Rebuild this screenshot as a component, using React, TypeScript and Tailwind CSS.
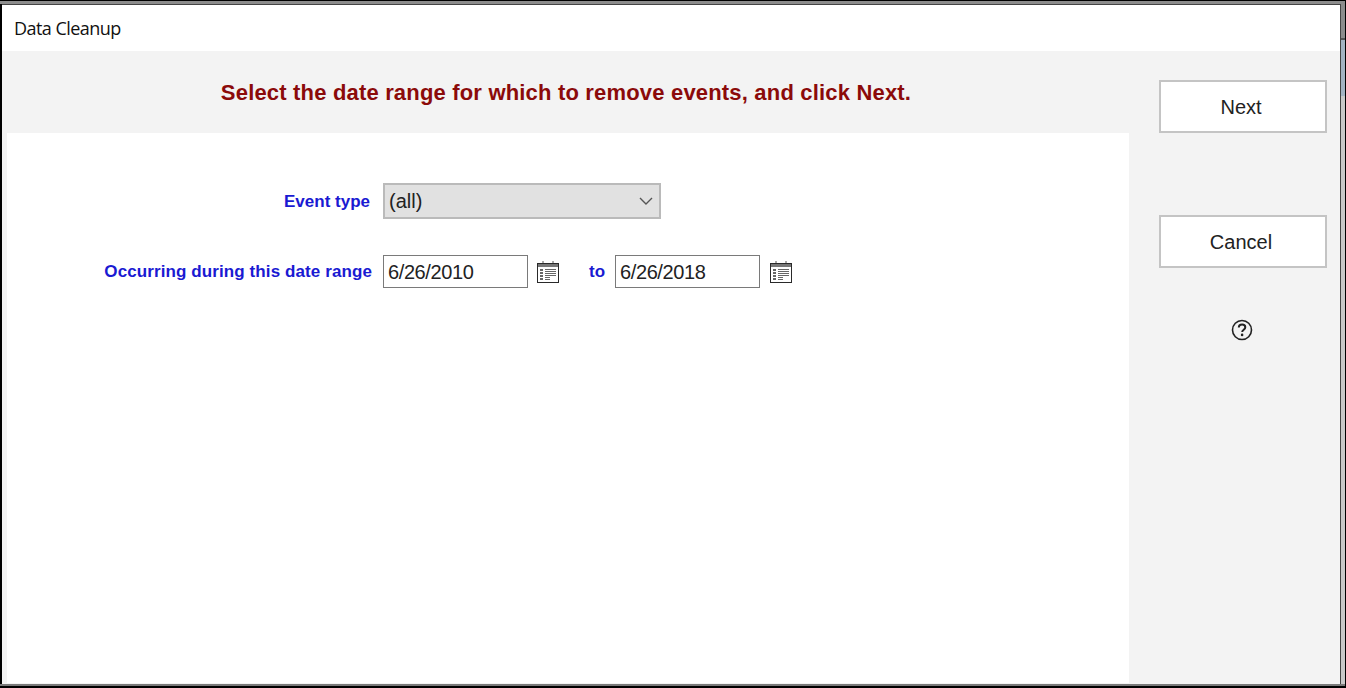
const sans = "font-['Liberation_Sans',Arial,sans-serif]";

function CalendarIcon() {
  return (
    <svg width="22" height="22" viewBox="0 0 22 22" className="shrink-0 mt-[1px]" fill="none">
      <path d="M6 0v3M16 0v3" stroke="#555" strokeWidth="1" />
      <rect x="0.5" y="2.5" width="21" height="19" stroke="#2a2a2a" strokeWidth="1" fill="#fff" />
      <rect x="1" y="3" width="20" height="3" fill="#777" />
      <path d="M3 9h3M3 12h3M3 15h3M3 18h3" stroke="#333" strokeWidth="1.5" />
      <path d="M8 8.5h11M8 10.5h11M8 12.5h11M8 14.5h11M8 16.5h5M8 18.5h5" stroke="#666" strokeWidth="1" />
    </svg>
  );
}

function DateField({ value }: { value: string }) {
  return (
    <div className="w-[145px] h-[33px] border border-[#7a7a7a] bg-white flex items-center pl-[4px] text-[20px] text-[#222] tracking-[-0.4px]">
      {value}
    </div>
  );
}

function SideButton({ label }: { label: string }) {
  return (
    <div className="w-[168px] h-[53px] border-2 border-[#c4c4c4] bg-white flex items-center justify-center pr-[4px] text-[20px] text-[#222]">
      {label}
    </div>
  );
}

export default function App() {
  return (
    <div className={`${sans} w-[1346px] h-[688px] overflow-hidden bg-black flex flex-col`}>
      <div className="h-[1px] shrink-0 bg-black" />
      <div className="h-[3px] shrink-0 bg-[#8c8c8c] mr-[1px]" />
      <div className="flex-1 min-h-0 flex">
        <div className="w-[2px] shrink-0 bg-black" />
        <div className="flex-1 min-w-0 flex flex-col border-t border-t-[#444] border-r border-r-[#444]">
          <div className="h-[46px] shrink-0 bg-white flex items-center pl-[12px] text-[18px] text-[#111] font-['Open_Sans','Noto_Sans',sans-serif] tracking-[-0.55px]">
            Data Cleanup
          </div>
          <div className="flex-1 min-h-0 flex bg-[#f3f3f3]">
            <div className="w-[1127px] shrink-0 flex flex-col">
              <div className="h-[82px] shrink-0 flex items-center justify-center pl-[1px] text-[22px] font-bold text-[#8b0a0a] tracking-[0.18px]">
                Select the date range for which to remove events, and click Next.
              </div>
              <div className="flex-1 ml-[5px] bg-white pt-[50px]">
                <div className="flex items-center h-[36px]">
                  <div className="w-[364px] shrink-0 text-right text-[17px] font-bold text-[#1a1ad2] pr-[1px] pt-[1px]">Event type</div>
                  <div className="ml-[12px] w-[278px] h-[36px] border-2 border-[#bababa] bg-[#e1e1e1] flex items-center justify-between pl-[4px] pr-[6px] text-[20px] text-[#222]">
                    <span>(all)</span>
                    <svg width="14" height="8" viewBox="0 0 14 8" fill="none">
                      <path d="M1 1l6 6 6-6" stroke="#555" strokeWidth="1.4" />
                    </svg>
                  </div>
                </div>
                <div className="flex items-center mt-[36px] h-[33px]">
                  <div className="w-[365px] shrink-0 text-right text-[17px] font-bold tracking-[0.1px] text-[#1a1ad2]">Occurring during this date range</div>
                  <div className="ml-[11px]"><DateField value="6/26/2010" /></div>
                  <div className="ml-[9px]"><CalendarIcon /></div>
                  <div className="ml-[30px] text-[17px] font-bold text-[#1a1ad2]">to</div>
                  <div className="ml-[10px]"><DateField value="6/26/2018" /></div>
                  <div className="ml-[10px]"><CalendarIcon /></div>
                </div>
              </div>
            </div>
            <div className="flex-1 flex flex-col items-start pt-[29px] pl-[30px]">
              <SideButton label="Next" />
              <div className="mt-[82px]"><SideButton label="Cancel" /></div>
              <svg width="22" height="22" viewBox="0 0 22 22" fill="none" className="mt-[51px] ml-[72px]">
                <circle cx="11" cy="11" r="9.5" stroke="#222" strokeWidth="1.6" />
                <path d="M7.8 8.6c0-2 1.4-3 3.3-3s3.2 1.1 3.2 2.7c0 2.4-3.1 2.4-3.1 4.7" stroke="#222" strokeWidth="2" />
                <circle cx="11.1" cy="15.9" r="1.3" fill="#222" />
              </svg>
            </div>
          </div>
          <div className="h-[1px] shrink-0 bg-[#f3f3f3]" />
        </div>
        <div className="w-[4px] shrink-0 flex flex-col">
          <div className="h-[34px] shrink-0 bg-[#8c8c8c]" />
          <div className="h-[2px] shrink-0 bg-[#555]" />
          <div className="h-[56px] shrink-0 bg-[#a3b3c2]" />
          <div className="flex-1 bg-[#c8c8c8]" />
        </div>
        <div className="w-[1px] shrink-0 bg-black" />
      </div>
      <div className="h-[2px] shrink-0 bg-[#7a7a7a] mr-[1px]" />
      <div className="h-[2px] shrink-0 bg-black" />
    </div>
  );
}
